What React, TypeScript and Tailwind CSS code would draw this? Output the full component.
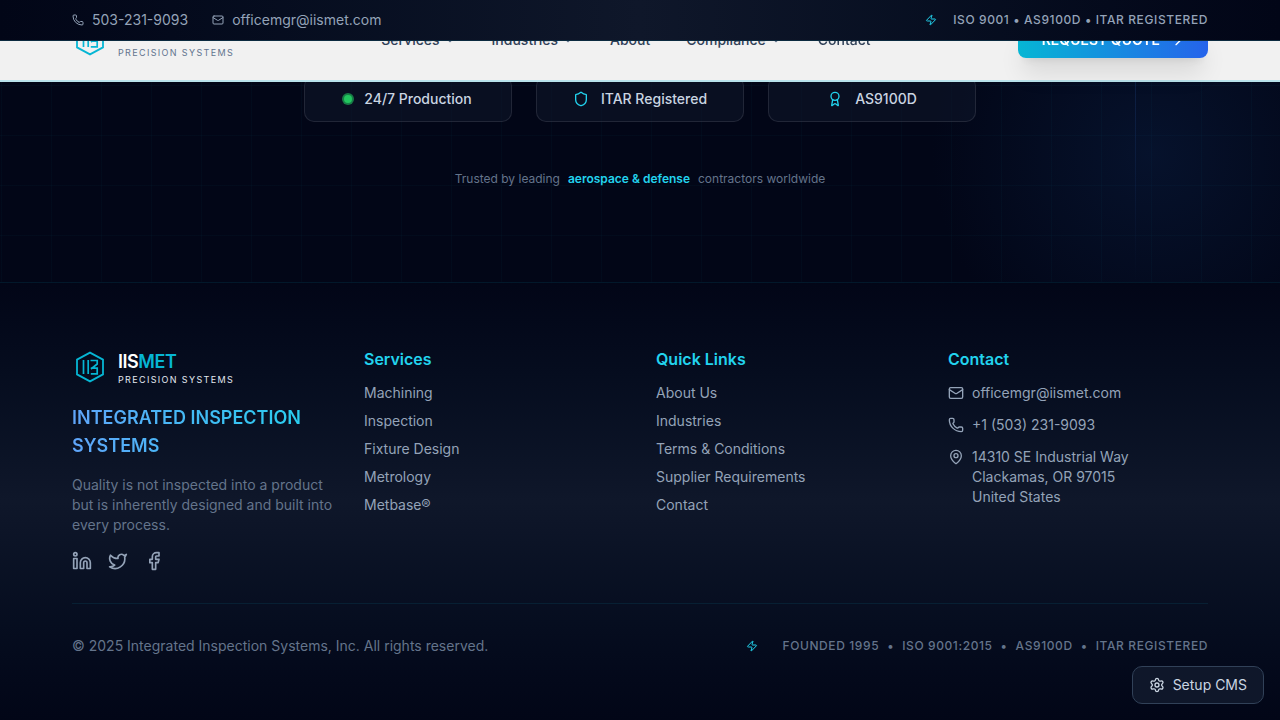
import type { ReactNode } from "react";
import {
  ArrowRight,
  Award,
  ChevronDown,
  Facebook,
  Linkedin,
  Mail,
  MapPin,
  Phone,
  Settings,
  Shield,
  Twitter,
  Zap,
} from "lucide-react";

const NAV = [
  { label: "Services", menu: true },
  { label: "Industries", menu: true },
  { label: "About", menu: false },
  { label: "Compliance", menu: true },
  { label: "Contact", menu: false },
];

const SERVICES = ["Machining", "Inspection", "Fixture Design", "Metrology", "Metbase®"];
const QUICK_LINKS = ["About Us", "Industries", "Terms & Conditions", "Supplier Requirements", "Contact"];
const CREDENTIALS = ["FOUNDED 1995", "ISO 9001:2015", "AS9100D", "ITAR REGISTERED"];

function Logo({ light = false }: { light?: boolean }) {
  return (
    <a href="#home" className="flex h-10 items-center gap-2.5">
      <svg viewBox="0 0 36 36" className="size-9 text-[#06b6d4]" fill="none" stroke="currentColor" aria-hidden="true">
        <path d="M18 3.6 31 10.6V25.4L18 32.4 5 25.4V10.6Z" strokeWidth="1.8" />
        <path d="M11.5 11V25M16.2 11V25" strokeWidth="1.7" />
        <path d="M18.5 11.5H25.2V15L19 20M18.8 19.2H25.2V24.8H18.8" strokeWidth="1.7" />
      </svg>
      <span className="flex flex-col">
        <span
          className={`text-lg leading-[26px] font-semibold tracking-tight ${light ? "text-white" : "text-slate-800"}`}
        >
          IIS<span className="text-[#06b6d4]">MET</span>
        </span>
        <span className={`text-[9px] leading-[10px] tracking-[0.15em] ${light ? "text-slate-200" : "text-slate-500"}`}>
          PRECISION SYSTEMS
        </span>
      </span>
    </a>
  );
}

function Badge({ icon, label }: { icon: ReactNode; label: string }) {
  return (
    <div className="flex items-center justify-center gap-3 rounded-[10px] border border-white/10 bg-slate-900/50 px-4 py-3 text-sm font-medium text-slate-300">
      {icon}
      {label}
    </div>
  );
}

function LinkColumn({ title, links }: { title: string; links: string[] }) {
  return (
    <div>
      <h3 className="mb-3 text-base font-semibold text-[#22d3ee]">{title}</h3>
      <ul className="flex flex-col gap-2">
        {links.map((link) => (
          <li key={link}>
            <a href="#link" className="block">{link}</a>
          </li>
        ))}
      </ul>
    </div>
  );
}

export default function App() {
  return (
    <div className="min-h-screen bg-[#020617] font-['Inter',sans-serif] text-sm text-[#94a3b8]">
      <div className="fixed inset-x-0 top-0 z-50 border-b border-[#0b2a3f] bg-linear-to-r from-[#020617] via-[#0f172a] to-[#020617]">
        <div className="mx-auto flex h-10 max-w-[1200px] items-center justify-between px-8">
          <div className="flex items-center gap-6">
            <a href="tel:5032319093" className="flex items-center gap-2">
              <Phone className="size-3" />
              503-231-9093
            </a>
            <a href="mailto:officemgr@iismet.com" className="flex items-center gap-2">
              <Mail className="size-3" />
              officemgr@iismet.com
            </a>
          </div>
          <div className="flex items-center gap-4 text-xs font-medium tracking-[0.6px]">
            <Zap className="size-3 text-[#22d3ee]" />
            ISO 9001 • AS9100D • ITAR REGISTERED
          </div>
        </div>
      </div>

      <header className="fixed inset-x-0 top-0 z-40 border-b-2 border-[#b9e3ec] bg-[#f1f1f1]">
        <div className="mx-auto flex h-20 max-w-[1200px] items-center justify-between px-8">
          <Logo />
          <nav className="flex items-center gap-9 font-medium text-slate-700">
            {NAV.map((item) => (
              <a key={item.label} href="#nav" className="flex items-center gap-1">
                {item.label}
                {item.menu && <ChevronDown className="size-3 text-slate-500" strokeWidth={3} />}
              </a>
            ))}
          </nav>
          <button
            type="button"
            className="flex h-9 items-center gap-2 rounded-lg bg-linear-to-r/srgb from-[#06b6d4] to-[#2563eb] px-6 font-semibold text-white shadow-xl"
          >
            REQUEST QUOTE
            <ArrowRight className="size-4" />
          </button>
        </div>
      </header>

      <main className="relative overflow-hidden bg-[radial-gradient(circle_at_90%_154px,#06122c_0,#020617_220px)] px-8 pt-[76px] pb-[94px]">
        <div
          aria-hidden="true"
          className="absolute inset-0 bg-[linear-gradient(to_right,rgba(6,182,212,0.03)_1px,transparent_1px),linear-gradient(to_bottom,rgba(6,182,212,0.03)_1px,transparent_1px)] bg-size-[50px_50px] bg-position-[1px_35px]"
        />
        <div
          aria-hidden="true"
          className="absolute top-0 right-36 h-full w-px bg-linear-to-b from-[#3b82f6]/20 to-transparent"
        />
        <div className="relative mx-auto grid max-w-2xl grid-cols-3 gap-6">
          <Badge
            label="24/7 Production"
            icon={<span className="size-2 rounded-full bg-[#22c55e] ring-2 ring-[#22c55e]/60" />}
          />
          <Badge label="ITAR Registered" icon={<Shield className="size-4 text-[#22d3ee]" />} />
          <Badge label="AS9100D" icon={<Award className="size-4 text-[#22d3ee]" />} />
        </div>
        <p className="relative mt-12 flex justify-center gap-2 text-xs leading-[18px] text-[#64748b]">
          Trusted by leading
          <span className="font-semibold text-[#22d3ee]">aerospace &amp; defense</span>
          contractors worldwide
        </p>
      </main>

      <footer className="border-t border-[#06b6d4]/10 bg-linear-to-b from-[#020617] via-[#0f172a] to-[#020617]">
        <div className="mx-auto max-w-[1200px] px-8 py-16">
          <div className="grid grid-cols-4 gap-8">
            <div>
              <Logo light />
              <h2 className="mt-[17px] bg-linear-to-r/srgb from-[#60a5fa] to-[#22d3ee] bg-clip-text text-lg font-semibold text-transparent">
                INTEGRATED INSPECTION SYSTEMS
              </h2>
              <p className="mt-[15px] -mr-2 text-[#64748b]">
                Quality is not inspected into a product but is inherently designed and built into every process.
              </p>
              <div className="mt-4 flex gap-4">
                <a href="#linkedin" aria-label="LinkedIn"><Linkedin className="size-5" /></a>
                <a href="#twitter" aria-label="Twitter"><Twitter className="size-5" /></a>
                <a href="#facebook" aria-label="Facebook"><Facebook className="size-5" /></a>
              </div>
            </div>
            <LinkColumn title="Services" links={SERVICES} />
            <LinkColumn title="Quick Links" links={QUICK_LINKS} />
            <div>
              <h3 className="mb-3 text-base font-semibold text-[#22d3ee]">Contact</h3>
              <address className="flex flex-col gap-3 not-italic">
                <a href="mailto:officemgr@iismet.com" className="flex items-center gap-2">
                  <Mail className="size-4" />
                  officemgr@iismet.com
                </a>
                <a href="tel:+15032319093" className="flex items-center gap-2">
                  <Phone className="size-4" />
                  +1 (503) 231-9093
                </a>
                <div className="flex gap-2">
                  <MapPin className="mt-0.5 size-4" />
                  <span>
                    14310 SE Industrial Way
                    <br />
                    Clackamas, OR 97015
                    <br />
                    United States
                  </span>
                </div>
              </address>
            </div>
          </div>
          <div className="mt-8 flex items-center justify-between border-t border-[#06b6d4]/10 pt-8 text-[#64748b]">
            <p>© 2025 Integrated Inspection Systems, Inc. All rights reserved.</p>
            <div className="flex items-center gap-2 text-xs font-medium tracking-[0.6px]">
              <Zap className="mr-4 size-3 text-[#22d3ee]" />
              {CREDENTIALS.map((item, index) => (
                <span key={item} className="flex gap-2">
                  {index > 0 && <span>•</span>}
                  {item}
                </span>
              ))}
            </div>
          </div>
        </div>
      </footer>

      <button
        type="button"
        className="fixed right-4 bottom-4 z-50 flex items-center gap-2 rounded-[10px] border border-slate-700 bg-[#0f172a] px-4 py-2 text-slate-300"
      >
        <Settings className="size-4" />
        Setup CMS
      </button>
    </div>
  );
}
